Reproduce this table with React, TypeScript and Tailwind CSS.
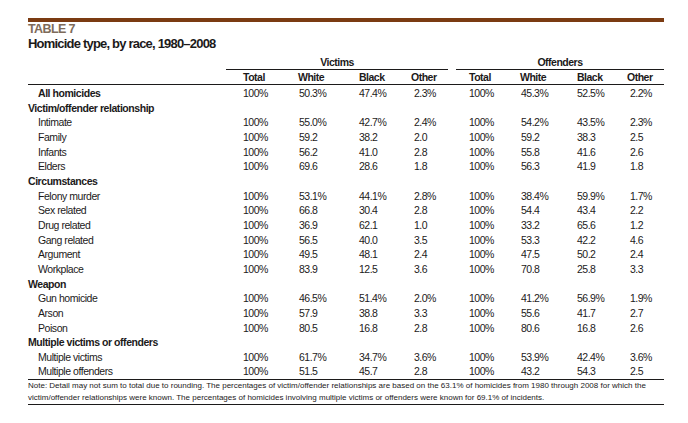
import React from "react";

type Row = { label: string; kind: "top" | "section" | "item"; v?: string[] };

const rows: Row[] = [
  { label: "All homicides", kind: "top", v: ["100%", "50.3%", "47.4%", "2.3%", "100%", "45.3%", "52.5%", "2.2%"] },
  { label: "Victim/offender relationship", kind: "section" },
  { label: "Intimate", kind: "item", v: ["100%", "55.0%", "42.7%", "2.4%", "100%", "54.2%", "43.5%", "2.3%"] },
  { label: "Family", kind: "item", v: ["100%", "59.2", "38.2", "2.0", "100%", "59.2", "38.3", "2.5"] },
  { label: "Infants", kind: "item", v: ["100%", "56.2", "41.0", "2.8", "100%", "55.8", "41.6", "2.6"] },
  { label: "Elders", kind: "item", v: ["100%", "69.6", "28.6", "1.8", "100%", "56.3", "41.9", "1.8"] },
  { label: "Circumstances", kind: "section" },
  { label: "Felony murder", kind: "item", v: ["100%", "53.1%", "44.1%", "2.8%", "100%", "38.4%", "59.9%", "1.7%"] },
  { label: "Sex related", kind: "item", v: ["100%", "66.8", "30.4", "2.8", "100%", "54.4", "43.4", "2.2"] },
  { label: "Drug related", kind: "item", v: ["100%", "36.9", "62.1", "1.0", "100%", "33.2", "65.6", "1.2"] },
  { label: "Gang related", kind: "item", v: ["100%", "56.5", "40.0", "3.5", "100%", "53.3", "42.2", "4.6"] },
  { label: "Argument", kind: "item", v: ["100%", "49.5", "48.1", "2.4", "100%", "47.5", "50.2", "2.4"] },
  { label: "Workplace", kind: "item", v: ["100%", "83.9", "12.5", "3.6", "100%", "70.8", "25.8", "3.3"] },
  { label: "Weapon", kind: "section" },
  { label: "Gun homicide", kind: "item", v: ["100%", "46.5%", "51.4%", "2.0%", "100%", "41.2%", "56.9%", "1.9%"] },
  { label: "Arson", kind: "item", v: ["100%", "57.9", "38.8", "3.3", "100%", "55.6", "41.7", "2.7"] },
  { label: "Poison", kind: "item", v: ["100%", "80.5", "16.8", "2.8", "100%", "80.6", "16.8", "2.6"] },
  { label: "Multiple victims or offenders", kind: "section" },
  { label: "Multiple victims", kind: "item", v: ["100%", "61.7%", "34.7%", "3.6%", "100%", "53.9%", "42.4%", "3.6%"] },
  { label: "Multiple offenders", kind: "item", v: ["100%", "51.5", "45.7", "2.8", "100%", "43.2", "54.3", "2.5"] },
];

const headers = ["Total", "White", "Black", "Other", "Total", "White", "Black", "Other"];

export default function App() {
  return (
    <div
      className="w-[688px] h-[423px] bg-white pt-[18px] text-[#1c1a1a]"
      style={{ fontFamily: "'Liberation Sans',Arial,sans-serif" }}
    >
      <div className="ml-[28px] w-[636px]">
        <div className="h-[4px] bg-[#7b3b12]" />
        <div className="text-[12.5px] font-bold leading-[14px] tracking-[-0.6px] text-[#7e6b5a]">TABLE 7</div>
        <div className="text-[13px] font-bold leading-[15px] tracking-[-0.8px]">
          Homicide type, by race, 1980–2008
        </div>

        <div className="mt-[5px] grid grid-cols-[198px_222px_8px_208px] text-[10.5px] font-bold leading-[13px] tracking-[-0.5px]">
          <div />
          <div className="text-center border-b border-[#1c1a1a]">Victims</div>
          <div />
          <div className="text-center border-b border-[#1c1a1a]">Offenders</div>
        </div>

        <div className="grid grid-cols-[215px_56px_60px_55px_55px_52px_56px_53px_34px] h-[15px] items-end border-b border-[#1c1a1a] text-[10.5px] font-bold leading-[14px] tracking-[-0.5px]">
          <div />
          {headers.map((h, i) => (
            <div key={i} className={i === 3 || i === 7 ? "-ml-[3px]" : i === 1 || i === 5 ? "-ml-[1px]" : ""}>
              {h}
            </div>
          ))}
        </div>

        <div className="pt-[1px]">
          {rows.map((r, i) => (
            <div
              key={i}
              className="grid grid-cols-[215px_56px_60px_55px_55px_52px_56px_53px_34px] h-[14.67px] leading-[14.67px] text-[10.5px] tracking-[-0.45px]"
            >
              <div
                className={
                  r.kind === "section"
                    ? "font-bold whitespace-nowrap"
                    : r.kind === "top"
                    ? "pl-[10px] font-bold"
                    : "pl-[10px]"
                }
              >
                {r.label}
              </div>
              {r.v
                ? r.v.map((x, j) => (
                    <div key={j} className="tracking-[-0.5px]">
                      {x}
                    </div>
                  ))
                : null}
            </div>
          ))}
        </div>

        <div className="border-t border-b border-[#1c1a1a] text-[8px] leading-[12px] whitespace-nowrap">
          Note: Detail may not sum to total due to rounding. The percentages of victim/offender relationships are based on the 63.1% of homicides from 1980 through 2008 for which the
          <br />
          victim/offender relationships were known. The percentages of homicides involving multiple victims or offenders were known for 69.1% of incidents.
        </div>
      </div>
    </div>
  );
}
